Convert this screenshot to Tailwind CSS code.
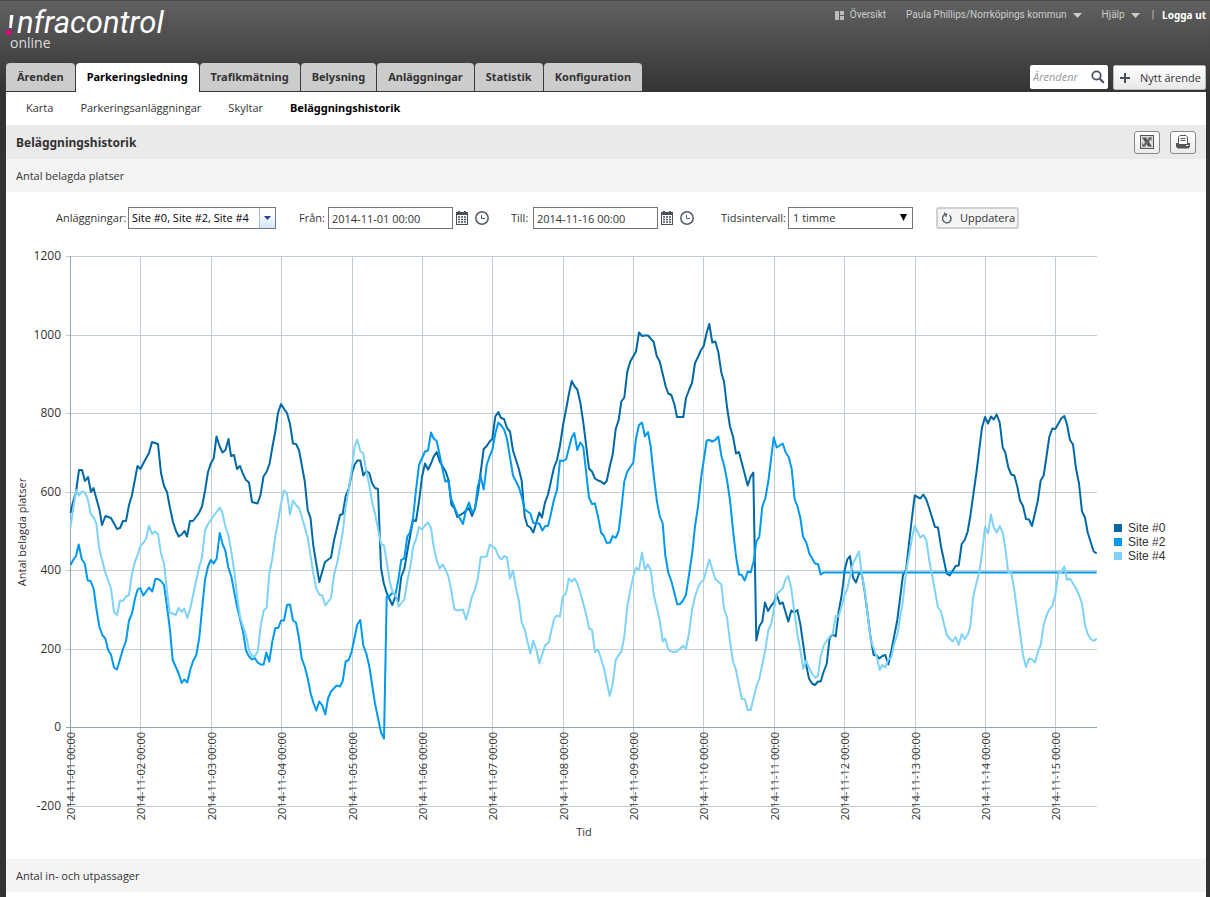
<!DOCTYPE html>
<html lang="sv">
<head>
    <meta charset="UTF-8">
    <meta name="viewport" content="width=device-width, initial-scale=1.0">
    <title>Infracontrol Online - Beläggningshistorik</title>
    <script src="https://cdn.jsdelivr.net/npm/@tailwindcss/browser@4"></script>
</head>
<body class="min-h-screen bg-[#333333] font-['Open_Sans',sans-serif] text-[11px] leading-4 text-[#333333] overflow-x-hidden">
    <header class="bg-linear-to-b from-[#616161] to-[#343434] pl-[6px] pr-1 border-t border-[#4c4c4c]">
        <div class="flex justify-between h-[62px]">
            <a href="#" class="block text-white pt-[7px]">
                <span class="flex items-end h-[30px]">
                    <svg class="w-[11px] h-6 shrink-0" viewBox="0 0 11 24"><path d="M4 1h3.500L5.800 14H3.200z" fill="#fff"/><circle cx="2.800" cy="18.500" r="2.700" fill="#e6007e"/></svg>
                    <span class="font-['Roboto',sans-serif] italic text-[31px] leading-[30px]">nfracontrol</span>
                </span>
                <span class="block pl-1 text-sm leading-[10px] text-[#dddddd]">online</span>
            </a>
            <nav class="flex items-center h-7 text-[10px] text-[#cccccc] font-['Roboto',sans-serif]">
                <a href="#" class="flex items-center gap-[6px] mr-5">
                    <svg class="w-[9px] h-[9px]" viewBox="0 0 9 9" fill="#bbbbbb"><path d="M0 0h4v9H0zM5 0h4v4H5zM5 5h4v4H5z"/></svg>
                    Översikt
                </a>
                <a href="#" class="flex items-center gap-[6px] mr-5">
                    Paula Phillips/Norrköpings kommun
                    <svg class="w-[9px] h-[5px]" viewBox="0 0 9 5" fill="#cccccc"><path d="M0 0h9L4.500 5z"/></svg>
                </a>
                <a href="#" class="flex items-center gap-[6px] mr-3">
                    Hjälp
                    <svg class="w-[9px] h-[5px]" viewBox="0 0 9 5" fill="#cccccc"><path d="M0 0h9L4.500 5z"/></svg>
                </a>
                <span class="mr-2">|</span>
                <a href="#" class="font-['Noto_Sans',sans-serif] font-bold text-white">Logga ut</a>
            </nav>
        </div>
        <div class="flex justify-between items-start h-[29px]">
            <nav class="flex gap-px font-['Noto_Sans',sans-serif] font-bold">
                <a href="#" class="h-7 px-[11px] leading-7 bg-[#cccccc] rounded-t">Ärenden</a>
                <a href="#" class="h-[29px] px-[11px] leading-7 bg-white text-black rounded-t">Parkeringsledning</a>
                <a href="#" class="h-7 px-[11px] leading-7 bg-[#cccccc] rounded-t">Trafikmätning</a>
                <a href="#" class="h-7 px-[11px] leading-7 bg-[#cccccc] rounded-t">Belysning</a>
                <a href="#" class="h-7 px-[11px] leading-7 bg-[#cccccc] rounded-t">Anläggningar</a>
                <a href="#" class="h-7 px-[11px] leading-7 bg-[#cccccc] rounded-t">Statistik</a>
                <a href="#" class="h-7 px-[11px] leading-7 bg-[#cccccc] rounded-t">Konfiguration</a>
            </nav>
            <form class="flex gap-[5px] pt-[2px]">
                <div class="flex items-center w-[78px] h-6 pl-[3px] pr-[3px] bg-white rounded-xs">
                    <input type="text" aria-label="Ärendenr" placeholder="Ärendenr" class="min-w-0 flex-1 italic placeholder:text-[#999999] outline-none">
                    <button type="button" aria-label="Sök"><svg class="block w-[14px] h-[14px]" viewBox="0 0 14 14" fill="none" stroke="#4a5061"><circle cx="5.500" cy="5.500" r="4.200" stroke-width="1.800"/><path d="M8.700 8.700L12.800 12.800" stroke-width="2.200"/></svg></button>
                </div>
                <button type="button" class="flex items-center gap-[10px] w-[93px] h-[25px] pl-[6px] bg-linear-to-b from-white to-[#e8e8e8] border border-[#bbbbbb] rounded-xs whitespace-nowrap">
                    <svg class="w-[10px] h-[10px]" viewBox="0 0 10 10" fill="#4a5061"><path d="M4 0h2v4h4v2H6v4H4V6H0V4h4z"/></svg>
                    Nytt ärende
                </button>
            </form>
        </div>
    </header>

    <main class="ml-[6px] mr-1 bg-white">
        <nav class="flex items-center gap-[27px] h-[33px] pl-5 pb-[2px]">
            <a href="#">Karta</a>
            <a href="#">Parkeringsanläggningar</a>
            <a href="#">Skyltar</a>
            <a href="#" class="font-['Noto_Sans',sans-serif] font-bold text-black">Beläggningshistorik</a>
        </nav>
        <div class="flex items-center justify-between h-[34px] pl-[10px] pr-[10px] bg-[#eaeaea]">
            <h1 class="pt-[2px] font-['Noto_Sans',sans-serif] text-xs font-bold">Beläggningshistorik</h1>
            <div class="flex gap-[10px]">
                <button type="button" aria-label="Exportera till Excel" class="flex items-center justify-center w-[26px] h-[23px] bg-linear-to-b from-white to-[#ececec] border border-[#888888] rounded-[3px]">
                    <svg class="w-[14px] h-[14px]" viewBox="0 0 14 14"><rect x=".5" y=".5" width="13" height="13" fill="#dddddd" stroke="#555555"/><path d="M2 2.500h4L12 11.500H8z" fill="#555555"/><path d="M11 2.500L3 11.500" stroke="#666666" stroke-width="2.500"/><path d="M7.500 2.500h4v4M2.500 7.500v4h4M9.500 4.500h2M2.500 9.500h2" fill="none" stroke="#777777" stroke-dasharray="1 1"/></svg>
                </button>
                <button type="button" aria-label="Skriv ut" class="flex items-center justify-center w-[26px] h-[23px] bg-linear-to-b from-white to-[#ececec] border border-[#888888] rounded-[3px]">
                    <svg class="w-[14px] h-[14px]" viewBox="0 0 14 14"><path d="M2.500 9V2L4 .5h6L11.500 2V9" fill="#fff" stroke="#555555"/><path d="M4.500 3.500h5M4.500 5.500h5" stroke="#555555"/><path d="M0 8h2.500v1h9V8H14v3.500L12.500 13.500h-11L0 11.500z" fill="#555555"/><path d="M10 10.500h2.500" stroke="#fff"/></svg>
                </button>
            </div>
        </div>
        <h2 class="h-[33px] pl-[10px] leading-[33px] bg-[#f4f4f4]">Antal belagda platser</h2>

        <form class="flex items-center h-[52px] pl-[50px] whitespace-nowrap">
            <label for="sites" class="w-[72px]">Anläggningar:</label>
            <div class="relative w-[148px] h-[22px]">
                <select id="sites" class="appearance-none w-full h-full pl-[3px] border border-[#777777] text-black">
                    <option>Site #0, Site #2, Site #4</option>
                </select>
                <span class="absolute right-px top-px bottom-px flex items-center justify-center w-4 border-l border-[#9dbde6] bg-linear-to-b from-white from-30% to-[#cfe4fb] pointer-events-none">
                    <svg class="w-[7px] h-1" viewBox="0 0 7 4" fill="#22449c"><path d="M0 0h7L3.500 4z"/></svg>
                </span>
            </div>
            <label for="from" class="w-[29px] ml-[23px]">Från:</label>
            <input id="from" type="text" value="2014-11-01 00:00" class="w-[125px] h-[22px] px-[3px] border border-[#777777]">
            <button type="button" aria-label="Välj datum" class="ml-[3px]"><svg class="block w-3 h-[14px]" viewBox="0 0 12 14"><path d="M0 1h2V0h2v1h4V0h2v1h2v13H0z" fill="#4a4f5c"/><path d="M1 4h10v9H1z" fill="#fff"/><path d="M2 6h8M2 8.500h8M2 11h8" stroke="#4a4f5c" stroke-width="1.600" stroke-dasharray="2 1"/></svg></button>
            <button type="button" aria-label="Välj tid" class="ml-[7px]"><svg class="block w-[14px] h-[14px]" viewBox="0 0 14 14" fill="none" stroke="#555b68"><circle cx="7" cy="7" r="6.200" stroke-width="1.500"/><path d="M6.500 4v3.500H10"/></svg></button>
            <label for="to" class="w-[22px] ml-[22px]">Till:</label>
            <input id="to" type="text" value="2014-11-16 00:00" class="w-[125px] h-[22px] px-[3px] border border-[#777777]">
            <button type="button" aria-label="Välj datum" class="ml-[3px]"><svg class="block w-3 h-[14px]" viewBox="0 0 12 14"><path d="M0 1h2V0h2v1h4V0h2v1h2v13H0z" fill="#4a4f5c"/><path d="M1 4h10v9H1z" fill="#fff"/><path d="M2 6h8M2 8.500h8M2 11h8" stroke="#4a4f5c" stroke-width="1.600" stroke-dasharray="2 1"/></svg></button>
            <button type="button" aria-label="Välj tid" class="ml-[7px]"><svg class="block w-[14px] h-[14px]" viewBox="0 0 14 14" fill="none" stroke="#555b68"><circle cx="7" cy="7" r="6.200" stroke-width="1.500"/><path d="M6.500 4v3.500H10"/></svg></button>
            <label for="interval" class="w-[67px] ml-[27px]">Tidsintervall:</label>
            <div class="relative w-[125px] h-[22px]">
                <select id="interval" class="appearance-none w-full h-full pl-1 border border-[#777777]">
                    <option>1 timme</option>
                </select>
                <svg class="absolute right-[6px] top-[7px] w-[7px] h-[7px] pointer-events-none" viewBox="0 0 7 7"><path d="M0 0h7L3.500 7z"/></svg>
            </div>
            <button type="button" class="flex items-center gap-[7px] w-[83px] h-[22px] ml-[23px] pl-[3px] bg-[#f4f4f4] border-2 border-[#d0d0d0] rounded-[3px]">
                <svg class="w-3 h-3" viewBox="0 0 12 12" fill="none" stroke="#555b68" stroke-width="1.400"><path d="M8.500 3.200A4.300 4.300 0 1 1 5 2.300"/><path d="M3 .7L5.600 2.300L4.800 5" stroke-width="1.200"/></svg>
                Uppdatera
            </button>
        </form>

        <svg class="block w-full" viewBox="6 244 1200 615" fill="#333333">
            <g id="grid" stroke="#c0cdd3" shape-rendering="crispEdges"></g>
            <path d="M66 727.500H1097M70.500 256V806" stroke="#90a4ae" shape-rendering="crispEdges"/>
            <g fill="none" stroke-width="2" stroke-linejoin="round">
                <polyline stroke="#0069a5" points="70.5,513 73,502 76,492 79,470 82,470 85,481 88,477 91,492 93.5,488 99.500,510 102,525 105.500,516 111,518 117,529 120,528 123,521 126,521 129,505 132,495 137.500,466 140.500,469 143.500,463 149,453 152,442 158,444 161,473 164,486 167,492 170,508 173,522 176,531 178.700,536.500 181.700,534.500 184.500,531 187,536.500 190,521 193,521 199,513 202,506.500 205,491 208,472 211,463 213.700,458.500 216.500,436.500 219.700,446.500 222.500,452.500 225.500,450 228.500,439 231,456 234,455 237,469 240,466 243,474 246,480 249,482.500 252,502 257.500,503.500 260.500,495 263.500,476.500 266.500,472 269.500,464 272.500,446.500 275.300,431.500 278,413 281,404 284.300,409.300 287,413 290,424 293,443.500 296,444 299,450 304.700,481 307.700,510 310.500,518 313.300,545.500 319.300,582 325,562 331,557.500 334,540.500 340,515 342.700,514 345.700,496 348.700,489 351.700,474 354.700,464.500 357.500,460.500 360.300,460.500 363.300,475.500 366.300,471 369.300,473 372,483 375,488 378,489 381,568 383.700,583 386.700,593 392.300,605 395.300,596.500 398.300,601.500 401.300,576.500 404.300,569 407.300,551.500 413,520 416,521 419,501.500 422,477 425,463.500 428,469.500 431,463.500 433.700,456.500 436.700,452 439.700,461.500 445.700,471.500 448.700,480.500 451.300,504.500 454.300,508 457.300,517 463.300,513 469,508 472,516 475,508 478,493 483.700,449 486.700,446 489.700,441.500 492.300,439 495.300,416.500 498.300,412 501,418 504,419 507,428 510,431.500 513,450.500 518.700,468.500 521.700,481 524.700,516.500 527.300,525.500 530.300,527.500 533.300,532.500 539.300,512.500 542,517.500 545,502.500 548,494.500 554,467.500 557,460 560,445.500 563.300,423.500 566,410 569,393.500 571.700,381 574.700,386.500 577.300,389.500 580.300,402.500 583.300,422.500 589,468.500 592,471.500 595,478.500 598,480.500 601,481.500 604,484 606.700,481 610,465.500 612.700,454.500 615.700,429 618.700,420 621.300,401.500 624.300,397.500 627.300,371.500 630.300,361.500 636,351.500 639,332.500 642,336 645,335.500 648,335.500 653.700,342 656.700,356 659.700,361.500 665.700,386.500 668.300,393.500 671.300,395 674.300,404 677,417 683.300,417 686,398 689,390 692,383 695,363 698,357 701,350 703.700,346 706.700,332.500 709.300,324 712.300,342.500 715.300,341.500 718.300,352 721.300,372.500 724,381.500 727,407 730,426.500 733,436.500 736,453.500 739,452 747.700,485.500 750.700,476.500 753.300,472.500 756.300,640.500 759.300,626.500 762.300,621.500 765,602.500 768,611 771,606 774,602.500 776.700,594.500 779.700,604 782.700,602.500 788.300,621.500 791.300,610.500 794.300,612.500 797.300,610 800.300,624 806,664 809,678.500 812,683.500 815,685 818,681.500 820.700,681.500 823.700,671.500 826.700,664 829.700,637.500 832.700,634.500 835.700,636.500 838.700,611.500 841.700,595 844.700,570 847.300,559.500 850,556 853,577.500 856,582.500 859,573.500 861.700,573.500 864.700,591.500 870.700,638.500 873.700,655 876.700,655.500 879.300,658.500 882.300,656 885.300,655 888.300,664.500 891.300,651 897.300,620 903,575 906,570 909,543.500 911.700,520 914.700,495.500 920.300,498.500 923.300,494.500 926.300,499.500 929.300,508.500 935,527 938,527.500 941,546.500 946.700,573.500 949.700,575.500 955.700,566 958.700,565.500 961.700,544 964.700,540 967.700,531.500 970.300,516 976.300,473.500 982,427.500 985,417 988,423.500 991,416.500 993.700,419.500 996.700,414.500 999.700,422.500 1002.700,447.500 1005.300,452.500 1008.300,467.500 1011.300,474.500 1014.300,475.500 1017.300,486.500 1020,500.500 1023,506 1026,519 1029,519.500 1032,526 1037.700,501.500 1040.700,480.500 1043.700,475.500 1046.700,455 1049.300,437 1052.300,428.500 1055.300,429 1061.300,418.500 1064.300,416 1067,424.500 1070,440 1073,444.500 1076,468.500 1079,483.500 1082,511.500 1085,517.500 1087.700,532.500 1093.700,551.500 1096.700,553.500"/>
                <polyline stroke="#0099f0" points="70.5,565 73.500,559.500 76,556 78.700,544.500 81.700,559 84.700,563.500 87.700,580.500 90.700,581 93.700,589 96.300,608 99.300,626.500 102.300,635 105.300,638.500 108.300,650.500 111,654.500 114,667.500 117,669.500 123,649 126,641 129,620.500 132,613.500 135,598.500 137.700,589.500 140.300,588 143.300,595.500 149,587.500 152.300,591.500 155.300,579 158,579 161,581 164,585 167,606.500 170,630 172.700,660 178.700,673.500 181.700,683 184.300,679.500 187.300,682.500 190.300,669.500 193.300,660.500 196.300,655 199.300,637.500 202.300,606.500 205,580 208,566.500 210.700,560 213.700,563.500 216.700,558.500 219.700,533 222.700,544.500 225.300,550.500 228.300,567.500 231.300,576.500 237,606.500 243,631.500 246,650.500 249,656.500 252,659.500 254.700,658 257.700,662.500 260.700,664.500 263.700,664.500 266.300,652.500 269.300,661.500 272.300,641.500 275.300,628 278.300,628 281,620.500 284,620.500 287,605 290,604.500 293,620.500 296,622.500 298.700,636.500 301.700,658.500 304.700,666.500 307.700,678.500 310.700,693.500 313.300,702.500 316.300,710.500 319.300,701.500 322.300,705.500 325.300,714.500 328,698.500 331,691.500 336.700,685.500 340,686.500 342.700,681 345.700,661.500 348.700,660 351.700,651.500 357.300,624.500 360.300,620 363.300,645.500 366.300,653.500 369.300,666.500 375,703.500 381,732.500 384,738.500 386.700,596.500 389.700,596 392.700,592.500 395.300,595 398.300,580 401.300,560 404.300,558.500 407.300,536.500 410,532.500 413,518.500 416,490 419,465 425,451.500 428,450.500 431,432.500 433.700,438.500 436.700,441 439.700,455 442.700,470 445.300,481.500 448.300,480.500 451.300,499.500 457.300,514 460,518.500 463,524 466,510 469,502.500 472,512.500 475,509.500 477.700,486.500 480.700,476.500 483.700,489.500 486.700,465 489.700,456 492.300,450 495.300,433.500 498.300,422.500 501.300,425.500 504.300,430 507,439 513,475.500 516,481.500 519,487.500 521.700,496.500 524.700,509.500 530.300,513.500 533.300,523 539.300,523.500 542.300,530.500 545.300,526 548,526 550,518 554,499.500 557,490 560,460.500 563.300,461 566,459.500 571.700,437.500 574.300,433 577.300,450 580.300,442.500 583.300,447 589,497.500 592,504 595,503.500 598,516.500 601,532.500 604,536 606.700,543 610,542.500 612.700,536 615.700,538 618.700,531 621.300,509.500 624.300,481.500 627.300,471.500 633.300,462.500 636,438.500 639,425 642,422.500 645,436.500 648,432 650.700,446.500 653.700,475.500 656.700,500 659.700,516 662.700,523.500 665.300,555.500 668.300,572.500 671.300,581 677.300,604.500 680,604 683,600.500 686,594.500 692,555 695,526.500 698,506.500 701,478.500 706.700,440.500 709.300,440 712.300,441.500 715.300,440 718.300,436.500 721.300,455.500 724,465 727,480 730,500 733,530 736,556 739,574.500 741.700,575 744.700,580.500 747.700,571.500 750.700,572.500 753.700,561 756.300,541.500 759.300,537 762.300,506.500 765.300,498.500 768.300,481.500 773.700,437.500 776.700,447.500 782.700,443.500 785.700,452.500 788.700,457 791.700,469 794.700,499.500 797.300,506 800.300,517.500 803,536.500 806.300,542.500 809.300,553.500 815,563.500 818,564 820.700,574.500 823.700,572.500 1096.700,572.500"/>
                <polyline stroke="#7ed3f7" points="70.5,527 74,503.500 76.300,490 79,495.500 82,491.500 84.700,492.500 87.700,498.500 90.700,514 93.700,517.500 96.300,523.500 99.300,549 105,571.500 111,588.500 114,612 117,615 120,600.500 123,601 126,596.500 129,595 132,573.500 135,561.500 137.700,555 140.300,546 143.300,543 146.300,538.500 149,525.500 152,534 155,531.500 158,534 161,553.500 164,563.500 166.700,588.500 169.700,612.500 175.700,615 178.700,608 181.700,612 184.300,608.500 187.300,618 190.300,608.500 196.300,580 199.300,566.500 202,557.500 205,530.500 208,524 219.700,507.500 222.300,512.500 225.300,526.500 228.300,535 231.300,551.500 234.300,571.500 237,595 240,616.500 243,626.500 246,635 249,650 252,656 254.700,656.500 257.700,651.500 260.700,626 263.700,610.500 266.700,607.500 269.300,573.500 272.300,558.500 275.300,536.500 278,521.500 281,503.500 284,490.500 287,493.500 290,514.500 293,500.500 296,505 299,508 301.700,516.500 307.700,537.500 313.300,573.500 316.300,588.500 319.300,594.500 322.300,595.500 325.300,605.500 331,598 334,575 337,563.500 342.700,532.500 345.700,506.500 348.700,490 351.700,470 354.700,446.500 357.300,439.500 360.300,451 363.300,453.500 366.300,471.500 369.300,485 372,501.500 375,513.500 381,544 384,545.500 386.700,561.500 389.700,581.500 392.700,592.500 395.300,594 398.700,606.500 404.300,599.500 407.300,581.500 410.300,566.500 413.300,546 416,539.500 419,527 422,529.500 425,525.500 428,522.500 431,528 433.700,546.500 436.700,560.500 439.700,568.500 442.700,564.500 445.700,570 448.700,577.500 451.300,590.500 454.300,609 457.300,610.500 463,609.500 466,619.500 469,609 472,596.500 475,589.500 477.700,579 480.700,557 486.700,556.500 489.700,544.500 495.300,548.500 498.300,556 501.300,559.500 504,556 507,557.500 510,578.500 513,570.500 516,588.500 518.700,599.500 521.700,622.500 524.700,629.500 530.300,653.500 533.300,640.500 536.300,649.500 539.300,663.500 545,645.500 548.700,642.500 554,619 556.700,615.500 560,616.500 562.700,596.500 566,593.500 568.700,578.500 571.700,581.500 574.700,578.500 577.300,583.500 580.300,592.500 586,613.500 589,628.500 592,630 595,652 598,649.500 601,658.500 604,668.500 609.700,696 612.700,684 615.700,660 618.700,655 621.300,652 624.300,636.500 627.300,606.500 630.300,590 633.300,576.500 636,567.500 639,570 642,552.500 645,570 647.700,564.500 650.700,569.500 653.700,594.500 659.700,620 662.700,641.500 665.300,638.500 668.300,649.500 671.300,651.500 674.300,652 677,651.500 683,646 686,648.500 689,633.500 692,610 695,596.500 698,587.500 701,582 703.700,580 709.300,559.500 715.300,579 721.300,584.500 724,608.500 727,617.500 730,641.500 733,661.500 736,670 741.700,699 744.700,699 747.700,710 750.700,710 756.300,686.500 759.300,679 765.300,650 768.300,630 771.300,623.500 776.700,594 782.700,588.500 785.700,579 788.300,576 791.300,588.500 794.300,611.500 797.300,633.500 800.300,650 803.300,669 806,660.500 809,667.500 812,673.500 815,677.500 818,676 820.700,656.500 823.700,645.500 829.700,636.500 832.700,634 835.700,616 838.700,616.500 844.700,595 847.300,589 850,576.500 853,563.500 859,551.500 861.700,573.500 864.700,590 867.700,615 870.700,640 876.700,656.500 879.700,670 882.300,665 885.300,667.500 888.300,659.500 891.300,657.500 894.300,643.500 897.300,635 903,600 906,572.500 911.700,540 914.700,525.500 920.300,537.500 923.300,535 926.300,540 929.300,560.500 932.300,576.500 938,607.500 941,611.500 946.700,635 949.700,638.500 952.700,641.500 955.700,637 958.700,645 961.700,634 964.700,639 967.700,635 970.300,626 973.300,596.500 976.300,583.500 979.300,572.500 982,553.500 985,527 988,533.500 991,514.500 993.700,527.500 996.700,532.500 999.700,526 1002.700,532.500 1005.300,548.500 1008.300,572.500 1011.300,573 1014.300,590 1023,655 1026,667 1029,658.500 1032,659.500 1035,662.500 1038,651.500 1040.700,645 1043.700,625 1046.700,615 1049.300,609.500 1052.300,606 1055.300,595 1058.300,573.500 1061.300,572 1064.300,566.500 1067,580 1070,578.500 1076,588.500 1079,595 1082,603.500 1085,625 1087.700,634 1090.700,639 1093.700,641 1096.700,638.500"/>
            </g>
            <g id="y_labels" class="text-xs" text-anchor="end"></g>
            <g id="x_labels" class="text-[11px]" text-anchor="end"></g>
            <text class="text-[11px]" text-anchor="middle" x="584" y="836">Tid</text>
            <text class="text-[11px]" text-anchor="middle" transform="translate(26 532) rotate(-90)">Antal belagda platser</text>
            <g class="font-['Liberation_Sans',sans-serif] text-xs">
                <rect x="1114" y="524" width="8" height="8" fill="#0069a5"/><text x="1128" y="532">Site #0</text>
                <rect x="1114" y="538" width="8" height="8" fill="#0099f0"/><text x="1128" y="546">Site #2</text>
                <rect x="1114" y="552" width="8" height="8" fill="#7ed3f7"/><text x="1128" y="560">Site #4</text>
            </g>
        </svg>

        <h2 class="h-[33px] pl-[10px] leading-[33px] bg-[#f4f4f4]">Antal in- och utpassager</h2>
        <div class="h-[5px]"></div>
    </main>

    <script>
        const grid = document.getElementById('grid');
        const xLabels = document.getElementById('x_labels');
        const yLabels = document.getElementById('y_labels');

        // one horizontal line per 200 places
        for (let i = 0; i < 8; i++) {
            const y = Math.floor(256.500 + i * 78.570);
            grid.innerHTML += `<path d="M66 ${y}.5H1097"/>`;
            yLabels.innerHTML += `<text x="61" y="${y + 4}">${1200 - i * 200}</text>`;
        }

        // one vertical line per day
        for (let i = 0; i < 15; i++) {
            const x = Math.floor(70.500 + i * 70.380);
            const day = String(i + 1).padStart(2, '0');
            grid.innerHTML += `<path d="M${x}.5 256V806"/>`;
            xLabels.innerHTML += `<text transform="translate(${x + 5} 732) rotate(-90)">2014-11-${day} 00:00</text>`;
        }
    </script>
</body>
</html>
